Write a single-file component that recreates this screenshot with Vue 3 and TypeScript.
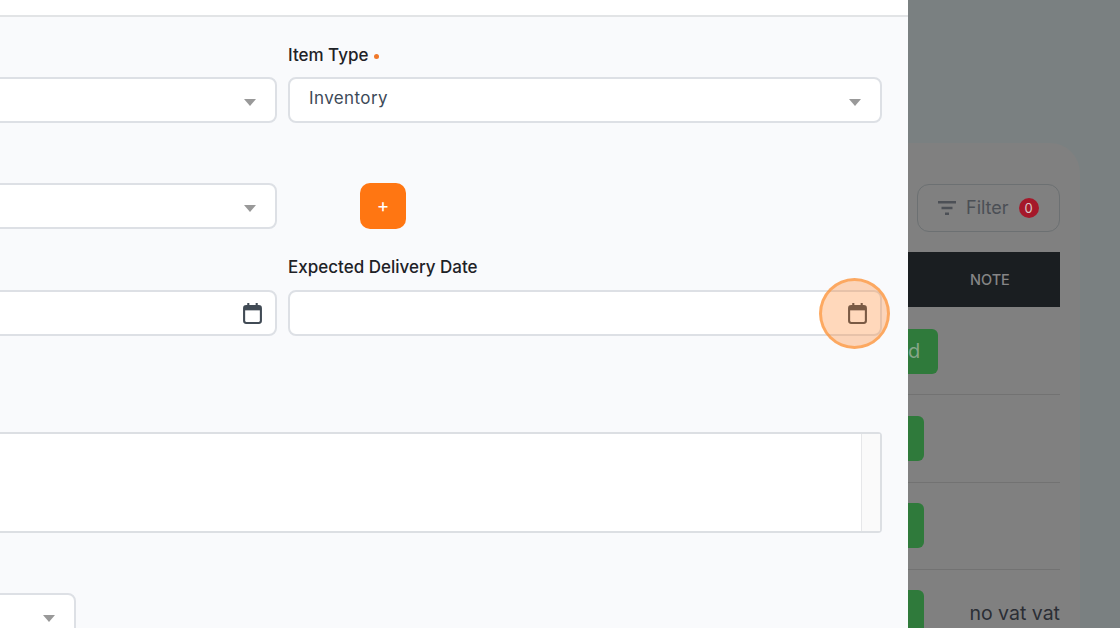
<script setup lang="ts">
interface Row { cls: string; label: string; note: string }
const rows: Row[] = [
  { cls: 'first', label: 'd', note: '' },
  { cls: 'second', label: '', note: '' },
  { cls: 'third', label: '', note: '' },
  { cls: 'last', label: '', note: 'no vat vat' },
]
</script>

<template>
  <div class="page">
    <section class="panel">
      <div class="topbar"></div>
      <div class="form">
        <div class="grid">
          <div class="field">
            <div class="label">&nbsp;</div>
            <div class="control"><span></span><i class="arrow"></i></div>
          </div>
          <div class="field">
            <div class="label">Item Type <b class="req"></b></div>
            <div class="control"><span class="value">Inventory</span><i class="arrow"></i></div>
          </div>
        </div>
        <div class="grid second-row">
          <div class="control"><span></span><i class="arrow"></i></div>
          <div class="add-cell"><button class="add" type="button">+</button></div>
        </div>
        <div class="grid third-row">
          <div class="field">
            <div class="label">&nbsp;</div>
            <div class="control date">
              <span></span>
              <svg class="cal" viewBox="0 0 18 20" width="19" height="21">
                <rect x="1" y="3" width="16" height="16" rx="2" fill="none" stroke="currentColor" stroke-width="2" />
                <rect x="1" y="3" width="16" height="4" fill="currentColor" />
                <path d="M5 0v4M13 0v4" stroke="currentColor" stroke-width="2" />
              </svg>
            </div>
          </div>
          <div class="field">
            <div class="label">Expected Delivery Date</div>
            <div class="control date">
              <span></span>
              <svg class="cal" viewBox="0 0 18 20" width="19" height="21">
                <rect x="1" y="3" width="16" height="16" rx="2" fill="none" stroke="currentColor" stroke-width="2" />
                <rect x="1" y="3" width="16" height="4" fill="currentColor" />
                <path d="M5 0v4M13 0v4" stroke="currentColor" stroke-width="2" />
              </svg>
            </div>
          </div>
        </div>
        <div class="textarea"><div class="strip"></div></div>
        <div class="control small"><span></span><i class="arrow"></i></div>
      </div>
    </section>

    <aside class="backdrop">
      <div class="card">
        <div class="filter">
          <svg viewBox="0 0 18 14" width="18" height="14">
            <path d="M0 1.2h18M3.5 7h11M7 12.8h4" fill="none" stroke="#4c5056" stroke-width="2.4" />
          </svg>
          <span class="filter-text">Filter</span>
          <span class="badge">0</span>
        </div>
        <div class="thead">NOTE</div>
        <div v-for="row in rows" :key="row.cls" class="row" :class="row.cls">
          <div class="pill">{{ row.label }}</div>
          <div class="note">{{ row.note }}</div>
        </div>
      </div>
    </aside>

    <div class="spot"></div>
  </div>
</template>

<style>
html, body { margin: 0; overflow: hidden; }
</style>

<style scoped>
.page {
  position: relative;
  display: flex;
  width: 1120px;
  height: 628px;
  overflow: hidden;
  font-family: Inter, "Noto Sans", sans-serif;
}
.panel {
  width: 908px;
  flex: none;
  background: #f9fafc;
  overflow: hidden;
}
.topbar {
  height: 15px;
  background: #fff;
  border-bottom: 2px solid #e2e4e6;
}
.form {
  margin-left: -10px;
  padding: 26px 26px 0 0;
}
.grid {
  display: grid;
  grid-template-columns: 287px 594px;
  column-gap: 11px;
}
.label {
  height: 24px;
  line-height: 24px;
  margin-bottom: 10px;
  font-size: 17px;
  font-weight: 500;
  color: #1e2227;
  white-space: nowrap;
}
.req {
  display: inline-block;
  width: 5px;
  height: 5px;
  margin: 0 0 2px 1px;
  border-radius: 50%;
  background: #f0782a;
}
.control {
  display: flex;
  align-items: center;
  justify-content: space-between;
  box-sizing: border-box;
  height: 46px;
  padding: 0 19px;
  background: #fff;
  border: 2px solid #dde0e5;
  border-radius: 8px;
}
.value {
  font-size: 17px;
  letter-spacing: 0.4px;
  color: #3d4a58;
  margin-top: -5px;
}
.arrow {
  width: 0;
  height: 0;
  margin-top: 4px;
  border-left: 6.5px solid transparent;
  border-right: 6.5px solid transparent;
  border-top: 7px solid #999;
}
.second-row { margin-top: 60px; }
.add-cell { padding-left: 72px; }
.add {
  display: block;
  width: 46px;
  height: 46px;
  padding: 0 0 2px;
  border: none;
  border-radius: 10px;
  background: #ff7612;
  color: #fff;
  font: 400 19px Inter, sans-serif;
}
.third-row { margin-top: 26px; }
.third-row .label { margin-bottom: 11px; }
.date { padding-right: 13px; }
.cal { color: #414b55; margin-top: 1px; }
.textarea {
  display: flex;
  justify-content: flex-end;
  box-sizing: border-box;
  height: 101px;
  margin-top: 96px;
  background: #fff;
  border: 2px solid #dcdfe3;
  border-radius: 4px;
}
.strip {
  width: 18px;
  background: #fafafa;
  border-left: 1px solid #e6e7e9;
}
.small {
  width: 86px;
  margin-top: 60px;
}
.backdrop {
  flex: 1;
  box-sizing: border-box;
  padding: 143px 40px 0 0;
  background: #7a8081;
  overflow: hidden;
}
.card {
  height: 520px;
  box-sizing: border-box;
  padding: 41px 20px 0 0;
  background: #808080;
  border-top-right-radius: 30px;
}
.filter {
  display: flex;
  align-items: center;
  box-sizing: border-box;
  width: 143px;
  height: 48px;
  margin-left: 9px;
  padding-left: 20px;
  border: 1.5px solid #6c7072;
  border-radius: 12px;
}
.filter-text {
  margin: -2px 0 0 10px;
  font-size: 18px;
  color: #4b4f55;
}
.badge {
  width: 20px;
  height: 20px;
  margin: -1px 0 0 10px;
  border-radius: 50%;
  background: #a5182a;
  color: #d8c8c8;
  font-size: 13px;
  line-height: 20px;
  text-align: center;
}
.thead {
  height: 55px;
  margin-top: 20px;
  padding-left: 62px;
  box-sizing: border-box;
  background: #1a1e21;
  color: #858585;
  font-size: 14.5px;
  font-weight: 500;
  line-height: 55px;
}
.row {
  display: flex;
  justify-content: space-between;
  box-sizing: border-box;
  border-bottom: 1px solid #727272;
}
.first { height: 88px; padding-top: 22px; }
.second { height: 88px; padding-top: 21px; }
.third { height: 87px; padding-top: 20px; }
.last { height: 87px; padding-top: 20px; border-bottom: none; }
.pill {
  box-sizing: border-box;
  width: 16px;
  height: 45px;
  background: #2f7a3b;
  border-radius: 0 6px 6px 0;
  color: #86a68a;
  font-size: 20px;
  line-height: 44px;
  overflow: hidden;
}
.first .pill { width: 30px; }
.note {
  margin-top: 12px;
  font-size: 19.5px;
  line-height: 22px;
  color: #2b2e35;
  white-space: nowrap;
}
.spot {
  position: absolute;
  left: 818.5px;
  top: 277.5px;
  width: 71px;
  height: 71px;
  box-sizing: border-box;
  border: 3px solid rgba(252, 150, 60, 0.7);
  border-radius: 50%;
  background: rgba(255, 125, 30, 0.3);
}
</style>
